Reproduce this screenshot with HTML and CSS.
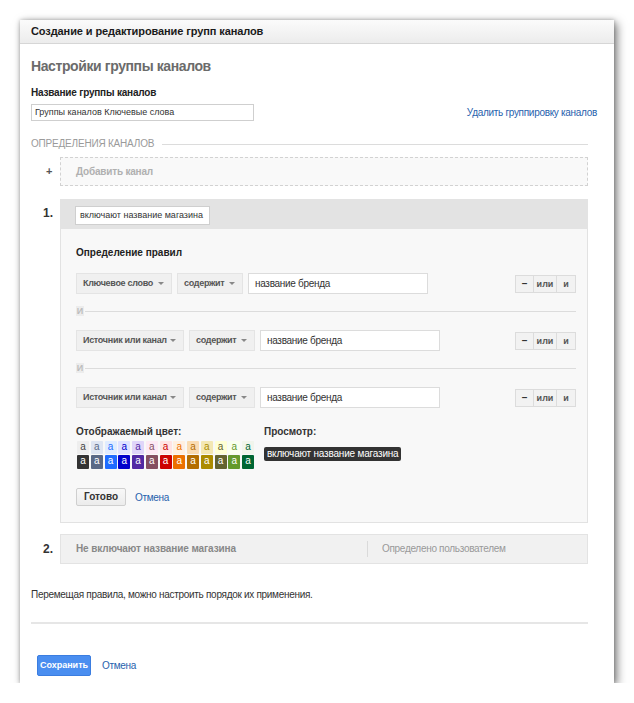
FILE: index.html
```html
<!DOCTYPE html>
<html lang="ru">
<head>
<meta charset="utf-8">
<link rel="stylesheet" href="styles.css">
</head>
<body>
<div class="dialog">
  <div class="dlg-head">Создание и редактирование групп каналов</div>
  <div class="dlg-body">
    <h1 class="title">Настройки группы каналов</h1>
    <div class="label">Название группы каналов</div>
    <div class="name-row">
      <div class="text-input name-input">Группы каналов Ключевые слова</div>
      <a class="link">Удалить группировку каналов</a>
    </div>
    <div class="section-title"><span>ОПРЕДЕЛЕНИЯ КАНАЛОВ</span><div class="section-line"></div></div>

    <div class="item">
      <div class="num plus">+</div>
      <div class="add-box">Добавить канал</div>
    </div>

    <div class="item item-1">
      <div class="num">1.</div>
      <div class="card">
        <div class="card-head"><div class="head-input">включают название магазина</div></div>
        <div class="card-body">
          <div class="sub-title">Определение правил</div>
          <div class="rule">
            <div class="select s1">Ключевое слово<span class="arr"></span></div>
            <div class="select s2">содержит<span class="arr"></span></div>
            <div class="rule-input">название бренда</div>
            <div class="btns"><span class="b-minus">–</span><span class="b-or">или</span><span class="b-and">и</span></div>
          </div>
          <div class="and-sep"><span>И</span><div class="and-line"></div></div>
          <div class="rule">
            <div class="select s3">Источник или канал<span class="arr"></span></div>
            <div class="select s2">содержит<span class="arr"></span></div>
            <div class="rule-input">название бренда</div>
            <div class="btns"><span class="b-minus">–</span><span class="b-or">или</span><span class="b-and">и</span></div>
          </div>
          <div class="and-sep"><span>И</span><div class="and-line"></div></div>
          <div class="rule">
            <div class="select s3">Источник или канал<span class="arr"></span></div>
            <div class="select s2">содержит<span class="arr"></span></div>
            <div class="rule-input">название бренда</div>
            <div class="btns"><span class="b-minus">–</span><span class="b-or">или</span><span class="b-and">и</span></div>
          </div>
          <div class="color-row">
            <div class="color-col">
              <div class="sub-label">Отображаемый цвет:</div>
              <div class="swatches">
                <span class="sw l c1">a</span><span class="sw l c2">a</span><span class="sw l c3">a</span><span class="sw l c4">a</span><span class="sw l c5">a</span><span class="sw l c6">a</span><span class="sw l c7">a</span><span class="sw l c8">a</span><span class="sw l c9">a</span><span class="sw l c10">a</span><span class="sw l c11">a</span><span class="sw l c12">a</span><span class="sw l c13">a</span>
                <span class="sw d c1">a</span><span class="sw d c2">a</span><span class="sw d c3">a</span><span class="sw d c4">a</span><span class="sw d c5">a</span><span class="sw d c6">a</span><span class="sw d c7">a</span><span class="sw d c8">a</span><span class="sw d c9">a</span><span class="sw d c10">a</span><span class="sw d c11">a</span><span class="sw d c12">a</span><span class="sw d c13">a</span>
              </div>
            </div>
            <div class="preview-col">
              <div class="sub-label">Просмотр:</div>
              <span class="preview">включают название магазина</span>
            </div>
          </div>
          <div class="actions">
            <span class="btn-done">Готово</span>
            <a class="link">Отмена</a>
          </div>
        </div>
      </div>
    </div>

    <div class="item item-2">
      <div class="num">2.</div>
      <div class="card2">
        <div class="c2-name">Не включают название магазина</div>
        <div class="c2-type">Определено пользователем</div>
      </div>
    </div>

    <p class="note">Перемещая правила, можно настроить порядок их применения.</p>
    <div class="hr"></div>
    <div class="footer">
      <span class="btn-save">Сохранить</span>
      <a class="link">Отмена</a>
    </div>
  </div>
</div>
</body>
</html>
```

FILE: styles.css
```css
html, body { margin: 0; padding: 0; background: #fff; }
body {
  font-family: "Liberation Sans", Arial, sans-serif;
  color: #222;
  padding: 20px 0 0 20px;
}
.dialog {
  width: 594px;
  height: 663px;
  background: #fff;
  box-shadow: 3px 3px 9px rgba(0,0,0,0.5), 0 0 4px rgba(0,0,0,0.25);
  box-sizing: border-box;
}
.dlg-head {
  height: 24px;
  box-sizing: border-box;
  border-bottom: 1px solid #d6d6d6;
  background: linear-gradient(#fbfbfb, #ececec);
  font-size: 11px;
  font-weight: bold;
  color: #1a1a1a;
  line-height: 23px;
  padding-left: 11px;
  letter-spacing: -0.1px;
}
.dlg-body { padding: 0 26px 0 11px; }
.title {
  margin: 13px 0 0;
  font-size: 14px;
  line-height: 18px;
  font-weight: bold;
  color: #6b6b6b;
  letter-spacing: -0.4px;
}
.label {
  margin-top: 11px;
  font-size: 10px;
  line-height: 14px;
  font-weight: bold;
  color: #222;
  letter-spacing: -0.2px;
}
.name-row {
  margin-top: 4px;
  margin-right: -9px;
  display: flex;
  justify-content: space-between;
  align-items: center;
}
.text-input {
  box-sizing: border-box;
  border: 1px solid #cfcfcf;
  background: #fff;
  font-size: 9px;
  color: #333;
}
.name-input {
  width: 223px;
  height: 17px;
  line-height: 15px;
  padding-left: 3px;
}
.link { color: #2762ad; font-size: 10px; text-decoration: none; letter-spacing: -0.3px; }
.section-title {
  margin-top: 17px;
  display: flex;
  align-items: center;
  font-size: 10px;
  line-height: 12px;
  color: #9a9a9a;
  letter-spacing: -0.2px;
}
.section-line { flex: 1; height: 1px; background: #dcdcdc; margin-left: 8px; }

.item { display: flex; align-items: flex-start; margin-top: 7px; }
.num {
  width: 29px;
  flex: none;
  font-size: 11px;
  font-weight: bold;
  color: #333;
  padding-left: 12px;
  box-sizing: border-box;
}
.plus { line-height: 29px; padding-left: 15px; font-weight: bold; font-size: 11px; color: #555; }
.add-box {
  flex: 1;
  height: 29px;
  box-sizing: border-box;
  border: 1px dashed #d2d2d2;
  background: #f9f9f9;
  color: #b0b0b0;
  font-size: 10px;
  font-weight: bold;
  line-height: 27px;
  padding-left: 15px;
  letter-spacing: -0.2px;
}
.item-1 { margin-top: 13px; }
.item-1 .num { line-height: 29px; font-size: 12px; }
.card { flex: 1; }
.card-head {
  height: 30px;
  background: #e3e3e3;
  padding: 7px 0 0 15px;
  box-sizing: border-box;
}
.head-input {
  display: inline-block;
  box-sizing: border-box;
  height: 19px;
  width: 135px;
  background: #fff;
  border: 1px solid #cfcfcf;
  font-size: 9px;
  line-height: 17px;
  padding-left: 4px;
  color: #333;
  white-space: nowrap;
  overflow: hidden;
}
.card-body {
  background: #f8f8f8;
  border: 1px solid #e2e2e2;
  border-top: none;
  padding: 17px 11px 16px 15px;
}
.sub-title {
  font-size: 10px;
  font-weight: bold;
  line-height: 14px;
  color: #222;
}
.rule {
  display: flex;
  align-items: center;
  height: 21px;
  margin-top: 13px;
}
.select {
  height: 21px;
  box-sizing: border-box;
  background: #f0f0f0;
  border: 1px solid #e4e4e4;
  font-size: 9px;
  font-weight: bold;
  color: #555;
  line-height: 19px;
  padding-left: 6px;
  position: relative;
  margin-right: 5px;
  letter-spacing: -0.3px;
  white-space: nowrap;
}
.arr {
  position: absolute;
  right: 7px;
  top: 8px;
  width: 0; height: 0;
  border-left: 3px solid transparent;
  border-right: 3px solid transparent;
  border-top: 3px solid #888;
}
.s1 { width: 96px; }
.s2 { width: 66px; }
.s3 { width: 108px; }
.rule-input {
  width: 180px;
  height: 21px;
  box-sizing: border-box;
  background: #fff;
  border: 1px solid #dcdcdc;
  font-size: 10px;
  color: #333;
  line-height: 19px;
  padding-left: 6px;
  letter-spacing: -0.3px;
}
.btns {
  margin-left: auto;
  display: flex;
  height: 18px;
  border: 1px solid #dcdcdc;
  background: #f2f2f2;
  box-sizing: border-box;
  font-size: 9px;
  font-weight: bold;
  color: #555;
  line-height: 16px;
}
.btns span { text-align: center; }
.b-minus { width: 17px; border-right: 1px solid #dcdcdc; font-size: 10px; color: #333; }
.b-or { width: 22px; border-right: 1px solid #dcdcdc; }
.b-and { width: 18px; }
.and-sep {
  display: flex;
  align-items: center;
  margin-top: 12px;
  height: 10px;
  font-size: 9px;
  font-weight: bold;
  color: #bdbdbd;
}
.and-sep span { background: #ececec; width: 8px; text-align: center; line-height: 10px; }
.and-line { flex: 1; height: 1px; background: #dcdcdc; margin-left: 1px; }
.and-sep + .rule { margin-top: 14px; }

.color-row { display: flex; margin-top: 17px; }
.color-col { width: 188px; }
.sub-label { font-size: 10px; font-weight: bold; color: #333; line-height: 14px; }
.swatches {
  margin-top: 2px;
  margin-left: 1px;
  display: grid;
  grid-template-columns: repeat(13, 12px);
  column-gap: 1.75px;
  row-gap: 1px;
}
.sw {
  width: 12px;
  height: 13px;
  font-size: 10px;
  line-height: 12px;
  text-align: center;
  border-radius: 1px;
}
.sw.d { color: #fff; height: 14px; }
.l.c1 { background: #eeeeee; color: #444; }
.l.c2 { background: #dee5f2; color: #5a6986; }
.l.c3 { background: #e0ecff; color: #206cff; }
.l.c4 { background: #dfe2ff; color: #0000cc; }
.l.c5 { background: #e0d5f9; color: #5229a3; }
.l.c6 { background: #fde9f4; color: #854f61; }
.l.c7 { background: #ffe3e3; color: #cc0000; }
.l.c8 { background: #fff0e1; color: #ec7000; }
.l.c9 { background: #fadcb3; color: #b36d00; }
.l.c10 { background: #f3e7b3; color: #ab8b00; }
.l.c11 { background: #ffffd4; color: #636330; }
.l.c12 { background: #f9ffef; color: #64992c; }
.l.c13 { background: #f1f5ec; color: #006633; }
.d.c1 { background: #333333; }
.d.c2 { background: #5a6986; }
.d.c3 { background: #206cff; }
.d.c4 { background: #0000cc; }
.d.c5 { background: #5229a3; }
.d.c6 { background: #854f61; }
.d.c7 { background: #cc0000; }
.d.c8 { background: #ec7000; }
.d.c9 { background: #b36d00; }
.d.c10 { background: #ab8b00; }
.d.c11 { background: #636330; }
.d.c12 { background: #64992c; }
.d.c13 { background: #006633; }
.preview-col .sub-label { margin-bottom: 4px; }
.preview {
  display: inline-block;
  background: #333;
  color: #fff;
  font-size: 10px;
  line-height: 14px;
  padding: 0 3px;
  border-radius: 2px;
  letter-spacing: -0.2px;
}

.actions { display: flex; align-items: center; margin-top: 19px; }
.btn-done {
  box-sizing: border-box;
  width: 50px;
  height: 18px;
  border: 1px solid #cfcfcf;
  border-radius: 2px;
  background: linear-gradient(#f8f8f8, #ececec);
  font-size: 10px;
  font-weight: bold;
  text-align: center;
  line-height: 16px;
  color: #333;
  margin-right: 9px;
}

.item-2 { margin-top: 11px; }
.item-2 .num { line-height: 30px; font-size: 12px; }
.card2 {
  flex: 1;
  display: flex;
  height: 30px;
  box-sizing: border-box;
  background: #f1f1f1;
  border: 1px solid #e3e3e3;
  font-size: 10px;
  line-height: 28px;
}
.c2-name {
  width: 307px;
  padding-left: 15px;
  box-sizing: border-box;
  font-weight: bold;
  color: #888;
  position: relative;
  letter-spacing: -0.1px;
}
.c2-name::after {
  content: "";
  position: absolute;
  right: 0; top: 6px; bottom: 6px;
  width: 1px;
  background: #dadada;
}
.c2-type { padding-left: 14px; color: #999; letter-spacing: -0.3px; }

.note {
  margin: 25px 0 0;
  font-size: 10px;
  line-height: 12px;
  color: #333;
  letter-spacing: -0.3px;
}
.hr { margin-top: 21px; height: 2px; background: #e6e6e6; }
.footer { display: flex; align-items: center; margin-top: 31px; padding-left: 6px; }
.btn-save {
  width: 54px;
  height: 21px;
  box-sizing: border-box;
  background: #4a8ef0;
  border: 1px solid #3b7de0;
  border-radius: 2px;
  color: #fff;
  font-size: 9px;
  font-weight: bold;
  text-align: center;
  line-height: 19px;
  margin-right: 11px;
}
```
